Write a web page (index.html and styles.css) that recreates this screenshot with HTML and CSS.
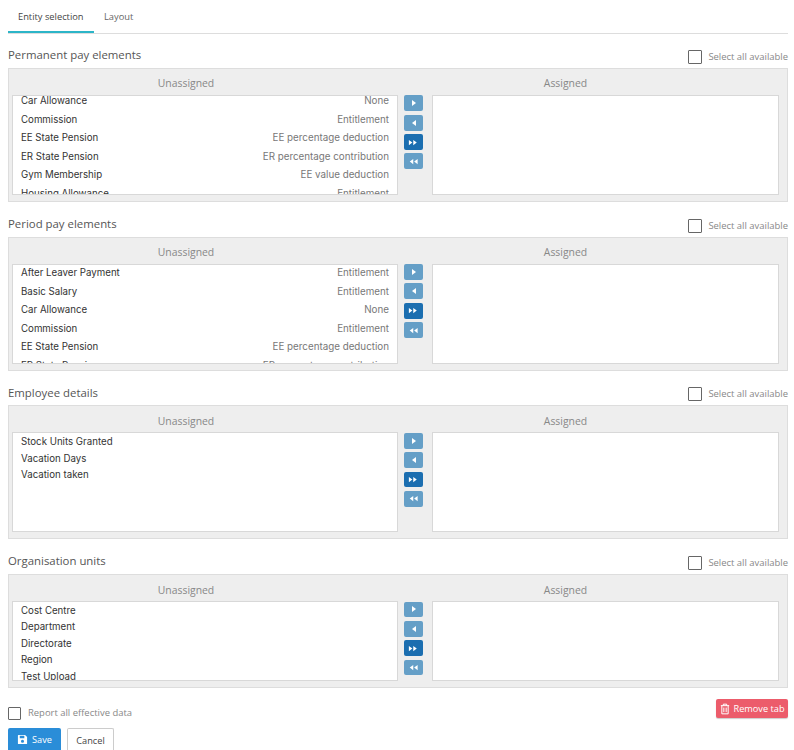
FILE: index.html
```html
<!DOCTYPE html>
<html lang="en">
<head>
<meta charset="utf-8">
<title>Entity selection</title>
<link rel="stylesheet" href="styles.css">
</head>
<body>
<svg class="defs" width="0" height="0" aria-hidden="true">
  <symbol id="one" viewBox="0 0 8 8"><path d="M2 1l4 3-4 3z"/></symbol>
  <symbol id="two" viewBox="0 0 12 8"><path d="M1 1l4 3-4 3zM6 1l4 3-4 3z"/></symbol>
</svg>
<nav class="tabs">
  <a class="tab active">Entity selection</a>
  <a class="tab">Layout</a>
</nav>

<section class="group">
  <header class="group-head"><h2>Permanent pay elements</h2><label class="check"><span class="box"></span>Select all available</label></header>
  <div class="panel">
    <div class="col left"><div class="col-title">Unassigned</div>
      <div class="list"><ul class="rows typed scroll-a">
        <li><span>Car Allowance</span><em>None</em></li>
        <li><span>Commission</span><em>Entitlement</em></li>
        <li><span>EE State Pension</span><em>EE percentage deduction</em></li>
        <li><span>ER State Pension</span><em>ER percentage contribution</em></li>
        <li><span>Gym Membership</span><em>EE value deduction</em></li>
        <li><span>Housing Allowance</span><em>Entitlement</em></li>
      </ul></div></div>
    <div class="moves">
      <button class="mv dim"><svg class="i1"><use href="#one"/></svg></button>
      <button class="mv dim flip"><svg class="i1"><use href="#one"/></svg></button>
      <button class="mv"><svg class="i2"><use href="#two"/></svg></button>
      <button class="mv dim flip"><svg class="i2"><use href="#two"/></svg></button>
    </div>
    <div class="col right"><div class="col-title">Assigned</div><div class="list"></div></div>
  </div>
</section>

<section class="group">
  <header class="group-head"><h2>Period pay elements</h2><label class="check"><span class="box"></span>Select all available</label></header>
  <div class="panel">
    <div class="col left"><div class="col-title">Unassigned</div>
      <div class="list"><ul class="rows typed scroll-b">
        <li><span>After Leaver Payment</span><em>Entitlement</em></li>
        <li><span>Basic Salary</span><em>Entitlement</em></li>
        <li><span>Car Allowance</span><em>None</em></li>
        <li><span>Commission</span><em>Entitlement</em></li>
        <li><span>EE State Pension</span><em>EE percentage deduction</em></li>
        <li><span>ER State Pension</span><em>ER percentage contribution</em></li>
      </ul></div></div>
    <div class="moves">
      <button class="mv dim"><svg class="i1"><use href="#one"/></svg></button>
      <button class="mv dim flip"><svg class="i1"><use href="#one"/></svg></button>
      <button class="mv"><svg class="i2"><use href="#two"/></svg></button>
      <button class="mv dim flip"><svg class="i2"><use href="#two"/></svg></button>
    </div>
    <div class="col right"><div class="col-title">Assigned</div><div class="list"></div></div>
  </div>
</section>

<section class="group">
  <header class="group-head"><h2>Employee details</h2><label class="check"><span class="box"></span>Select all available</label></header>
  <div class="panel">
    <div class="col left"><div class="col-title">Unassigned</div>
      <div class="list"><ul class="rows plain">
        <li><span>Stock Units Granted</span></li>
        <li><span>Vacation Days</span></li>
        <li><span>Vacation taken</span></li>
      </ul></div></div>
    <div class="moves">
      <button class="mv dim"><svg class="i1"><use href="#one"/></svg></button>
      <button class="mv dim flip"><svg class="i1"><use href="#one"/></svg></button>
      <button class="mv"><svg class="i2"><use href="#two"/></svg></button>
      <button class="mv dim flip"><svg class="i2"><use href="#two"/></svg></button>
    </div>
    <div class="col right"><div class="col-title">Assigned</div><div class="list"></div></div>
  </div>
</section>

<section class="group">
  <header class="group-head"><h2>Organisation units</h2><label class="check"><span class="box"></span>Select all available</label></header>
  <div class="panel short">
    <div class="col left"><div class="col-title">Unassigned</div>
      <div class="list"><ul class="rows plain">
        <li><span>Cost Centre</span></li>
        <li><span>Department</span></li>
        <li><span>Directorate</span></li>
        <li><span>Region</span></li>
        <li><span>Test Upload</span></li>
      </ul></div></div>
    <div class="moves">
      <button class="mv dim"><svg class="i1"><use href="#one"/></svg></button>
      <button class="mv dim flip"><svg class="i1"><use href="#one"/></svg></button>
      <button class="mv"><svg class="i2"><use href="#two"/></svg></button>
      <button class="mv dim flip"><svg class="i2"><use href="#two"/></svg></button>
    </div>
    <div class="col right"><div class="col-title">Assigned</div><div class="list"></div></div>
  </div>
</section>

<div class="options">
  <label class="check report"><span class="box small"></span>Report all effective data</label>
  <button class="remove">
    <svg viewBox="0 0 12 14" width="10" height="12" fill="none" stroke="currentColor" stroke-width="1.2"><path d="M1 3h10M4 3V1.2h4V3M2.2 3v9.8h7.6V3M4.6 5.3v5.5M7.4 5.3v5.5"/></svg>
    Remove tab</button>
</div>
<div class="actions">
  <button class="save">
    <svg viewBox="0 0 12 12" width="11" height="11"><path fill="currentColor" fill-rule="evenodd" d="M1.5 1h7.3L11 3.2v7.3a.5.5 0 0 1-.5.5h-9a.5.5 0 0 1-.5-.5v-9a.5.5 0 0 1 .5-.5zM3 2v2.6h5V2zM6 6.2a1.7 1.7 0 1 0 0 3.4 1.7 1.7 0 0 0 0-3.4z"/></svg>
    Save</button>
  <button class="cancel">Cancel</button>
</div>
</body>
</html>
```

FILE: styles.css
```css
* { box-sizing: border-box; }
html, body { height: 750px; overflow: hidden; }
body { margin: 0; padding: 0 6px 0 8px; background: #fff; font-family: "Open Sans", sans-serif; color: #666; }
.defs { position: absolute; }
button { font-family: inherit; cursor: pointer; }

.tabs { display: flex; height: 34px; border-bottom: 1px solid #ddd; margin-bottom: 12px; }
.tab { height: 33px; padding: 10px 10px 0; font-size: 9.3px; line-height: 14px; color: #666; }
.tab.active { width: 86px; color: #444; border-bottom: 2px solid #2cb5c8; }
.tab:not(.active) { padding-left: 10px; }

.group { margin-bottom: 12.7px; }
.group-head { height: 22px; display: flex; justify-content: space-between; align-items: flex-start; }
h2 { margin: 0; padding-top: .3px; font-size: 11.4px; font-weight: 400; line-height: 18px; color: #555; }
.check { display: flex; align-items: center; font-size: 9.45px; color: #888; line-height: 14px; white-space: nowrap; }
.box { width: 14px; height: 14px; border: 1px solid #666; border-radius: 1px; background: #fff; margin-right: 6px; }
.group-head .check { height: 16px; margin-top: 3px; }

.panel { height: 134px; display: flex; background: #eee; border: 1px solid #ddd; padding: 0 8px 0 3px; }
.panel.short { height: 114px; }
.col { display: flex; flex-direction: column; }
.left { width: 386px; }
.right { width: 347px; }
.col-title { height: 26px; padding-top: 6.45px; font-size: 10.4px; line-height: 16px; text-align: center; color: #888; }
.left .col-title { padding-right: 38px; }
.right .col-title { padding-right: 80px; }
.list { height: 100px; background: #fff; border: 1px solid #d8d8d8; overflow: hidden; }
.panel.short .list { height: 80px; }

.rows { list-style: none; margin: 0; padding: 0; font-family: Inter, sans-serif; font-size: 9.7px; color: #333; }
.rows li { display: flex; justify-content: space-between; height: 16.5px; line-height: 16.5px; padding: 0 8px; white-space: nowrap; }
.rows em { font-style: normal; font-size: 9.8px; color: #777; }
.plain { padding-top: .8px; }
.typed li { height: 18.5px; line-height: 18.5px; }
.scroll-a { margin-top: -4px; }
.scroll-b { margin-top: -.6px; }

.moves { width: 34px; flex: none; padding: 26.45px 9px 0 6px; display: flex; flex-direction: column; gap: 3.55px; }
.mv { width: 19px; height: 15.8px; padding: 0; border: 0; border-radius: 2px; background: #1b6eb0; color: #fff; display: flex; align-items: center; justify-content: center; }
.mv svg { fill: currentColor; display: block; }
.mv.dim { background: #659fc7; }
.mv.flip svg { transform: scaleX(-1); }
.i1 { width: 8px; height: 8px; }
.i2 { width: 10.5px; height: 7px; }

.options { display: flex; justify-content: space-between; align-items: flex-start; margin-top: -1.6px; height: 29px; }
.report { margin-top: 7px; }
.box.small { width: 13px; height: 13px; margin-right: 7px; }
.remove { height: 19px; width: 72px; padding: 0; border: 0; border-radius: 2px; background: #ec5c6b; color: #fff; font-size: 9.2px; display: flex; align-items: center; justify-content: center; gap: 4px; box-shadow: 0 1px 1px rgba(0,0,0,.2); }
.actions { display: flex; gap: 6px; height: 23px; }
.save { width: 53px; height: 23px; padding: 0; border: 0; border-radius: 2px 2px 0 0; background: #2a8dd8; color: #fff; font-size: 9.2px; display: flex; align-items: center; justify-content: center; gap: 4px; }
.cancel { width: 47px; height: 23px; padding: 0; border: 1px solid #ccc; border-bottom: 0; border-radius: 2px 2px 0 0; background: #fff; color: #444; font-size: 9.2px; }
```
